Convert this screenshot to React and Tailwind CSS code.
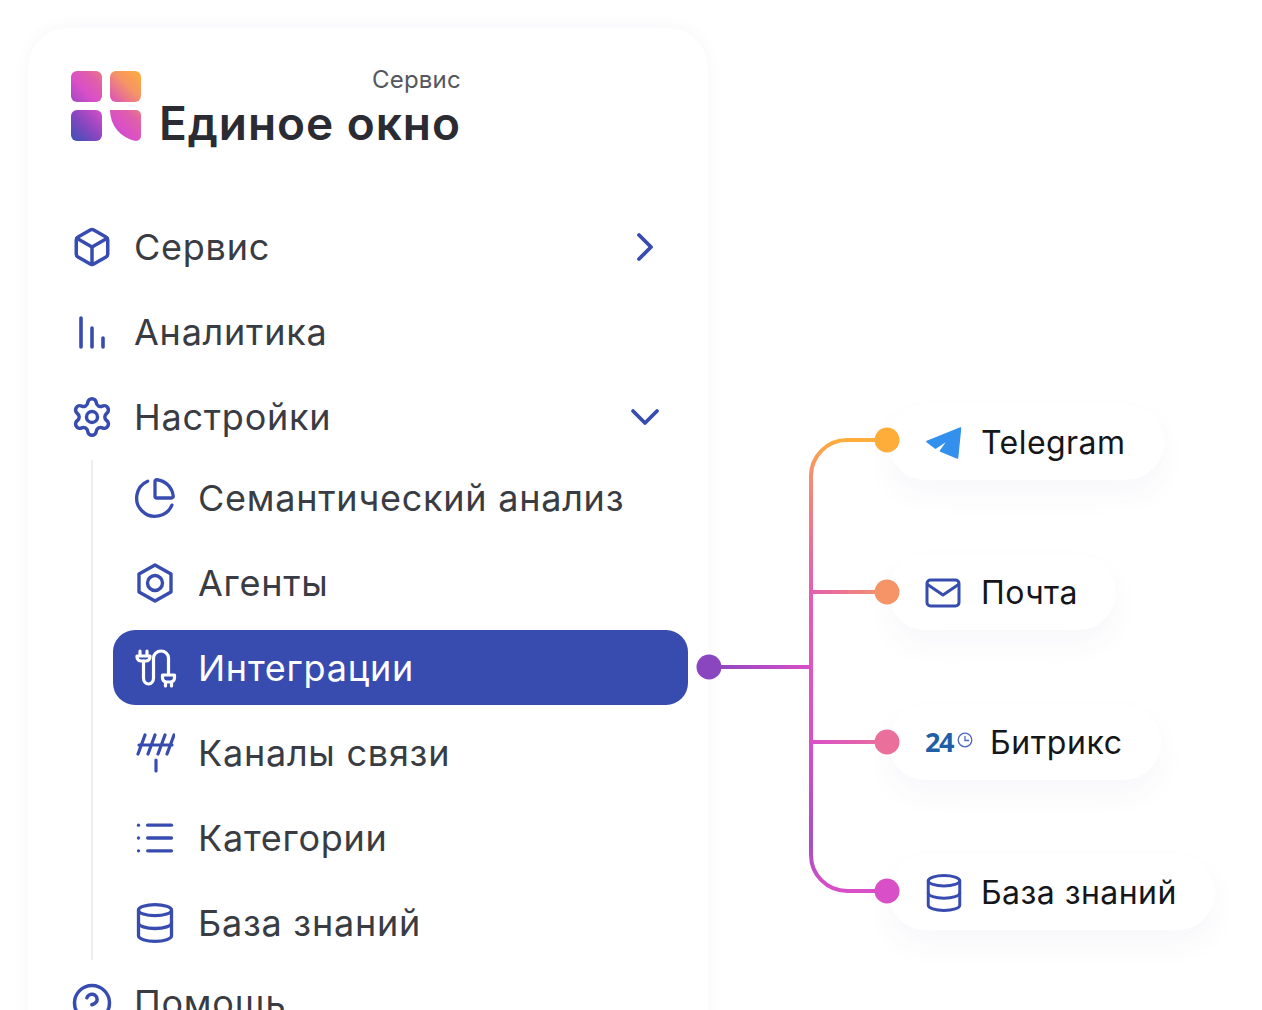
import { Box, ChevronRight, ChevronDown, Settings, ChartPie, List, Database, CircleHelp } from "lucide-react";

const blue = "#384cb0";

function Logo() {
  return (
    <svg width="72" height="72" viewBox="70 70 72 72" className="shrink-0">
      <defs>
        <linearGradient id="logoGrad" gradientUnits="userSpaceOnUse" x1="71" y1="141" x2="141" y2="71">
          <stop offset="0" stopColor="#3b50b8" />
          <stop offset="0.22" stopColor="#8a46bf" />
          <stop offset="0.45" stopColor="#d94fc8" />
          <stop offset="0.62" stopColor="#e060a8" />
          <stop offset="0.8" stopColor="#f59467" />
          <stop offset="1" stopColor="#ffad3a" />
        </linearGradient>
      </defs>
      <rect x="71" y="71" width="31" height="31" rx="6" fill="url(#logoGrad)" />
      <rect x="110" y="71" width="31" height="31" rx="6" fill="url(#logoGrad)" />
      <rect x="71" y="110" width="31" height="31" rx="6" fill="url(#logoGrad)" />
      <path d="M110 110H136a5 5 0 0 1 5 5V136a5 5 0 0 1-5 5A31 31 0 0 1 110 110Z" fill="url(#logoGrad)" />
    </svg>
  );
}

function BarsIcon() {
  return (
    <svg width="40" height="40" viewBox="0 0 40 40" fill="none" stroke={blue} strokeWidth="3.6" strokeLinecap="round">
      <path d="M9 6V35M20 16V35M31 26V35" />
    </svg>
  );
}

function NutIcon() {
  return (
    <svg width="40" height="40" viewBox="0 0 40 40" fill="none" stroke={blue} strokeWidth="3.4" strokeLinejoin="round">
      <path d="M20 2 36 11V29L20 38 4 29V11Z" />
      <circle cx="20" cy="20" r="7.5" />
    </svg>
  );
}

function PlugIcon() {
  return (
    <svg width="40" height="40" viewBox="0 0 40 40" fill="none" stroke="#fff" strokeWidth="3.2" strokeLinecap="round" strokeLinejoin="round" className="overflow-visible">
      <path d="M5 3V8M12 3V8M2 8H15V9A4 4 0 0 1 11 13H6A4 4 0 0 1 2 9Z" />
      <path d="M8.5 13V30A5 6 0 0 0 18.5 30V10A7.5 7 0 0 1 33.5 10V26" />
      <path d="M27.5 27H39.5V30A4 4 0 0 1 35.5 34H31.5A4 4 0 0 1 27.5 30ZM30.5 34V38M36.5 34V38" />
    </svg>
  );
}

function AntennaIcon() {
  return (
    <svg width="40" height="40" viewBox="0 0 40 40" fill="none" stroke={blue} strokeWidth="3.2" strokeLinecap="round">
      <path d="M10 2 3 21M20 2 13 21M30 2 23 21M39 2 32 21M4 12H37" />
      <path d="M21 27V38" />
    </svg>
  );
}

function TelegramIcon() {
  return (
    <svg width="38" height="34" viewBox="0 0 38 34" fill="#3391ed" stroke="#3391ed" strokeWidth="1.6" strokeLinejoin="round">
      <path d="M2 15.5 35.5 2 32.5 32 15.5 25 24 13 10.5 22Z" />
    </svg>
  );
}

function MailIcon() {
  return (
    <svg width="36" height="30" viewBox="0 0 36 30" fill="none" stroke={blue} strokeWidth="3" strokeLinejoin="round" strokeLinecap="round">
      <rect x="2" y="2" width="32" height="26" rx="3.5" />
      <path d="M2.5 6.5 18 17 33.5 6.5" />
    </svg>
  );
}

function ClockIcon() {
  return (
    <svg width="16" height="16" viewBox="0 0 16 16" fill="none" stroke="#4a68c8" strokeWidth="1.3">
      <circle cx="8" cy="8" r="6.8" />
      <path d="M8 4V8.5H12" />
    </svg>
  );
}

function TopRow({ icon, label, arrow }) {
  return (
    <div className="h-[75px] flex items-center">
      <div className="w-[44px] flex justify-center">{icon}</div>
      <span className="ml-[20px] text-[36px] tracking-[0.75px] text-[#3a3c44]">{label}</span>
      {arrow && <div className="ml-auto mr-[39px] flex">{arrow}</div>}
    </div>
  );
}

function SubRow({ icon, label, active }) {
  return (
    <div className={`h-[75px] w-[575px] rounded-[22px] pl-[20px] flex items-center ${active ? "bg-[#384cb0] text-white" : "text-[#3a3c44]"}`}>
      <div className="w-[44px] flex justify-center">{icon}</div>
      <span className="ml-[21px] text-[36px] tracking-[0.75px]">{label}</span>
    </div>
  );
}

function Pill({ children }) {
  return (
    <div className="h-[75px] w-fit rounded-[38px] bg-white pl-[37px] pr-[38px] flex items-center shadow-[0_14px_30px_rgba(60,60,140,0.045)] text-[32px] tracking-[0.45px] text-[#15161a]">
      {children}
    </div>
  );
}

function Connectors() {
  return (
    <svg className="absolute inset-0" width="1262" height="1010" viewBox="0 0 1262 1010" fill="none" strokeWidth="4">
      <defs>
        <linearGradient id="trunk" gradientUnits="userSpaceOnUse" x1="0" y1="440" x2="0" y2="891">
          <stop offset="0" stopColor="#ffad3a" />
          <stop offset="0.07" stopColor="#f48f70" />
          <stop offset="0.33" stopColor="#e45fb0" />
          <stop offset="0.66" stopColor="#d94fc8" />
          <stop offset="0.9" stopColor="#a84fc4" />
          <stop offset="1" stopColor="#d94fc8" />
        </linearGradient>
        <linearGradient id="b1" gradientUnits="userSpaceOnUse" x1="811" y1="0" x2="887" y2="0">
          <stop offset="0" stopColor="#e45fb0" />
          <stop offset="1" stopColor="#f59467" />
        </linearGradient>
        <linearGradient id="b2" gradientUnits="userSpaceOnUse" x1="709" y1="0" x2="811" y2="0">
          <stop offset="0" stopColor="#8a46bf" />
          <stop offset="1" stopColor="#d94fc8" />
        </linearGradient>
        <linearGradient id="b3" gradientUnits="userSpaceOnUse" x1="811" y1="0" x2="887" y2="0">
          <stop offset="0" stopColor="#d94fc8" />
          <stop offset="1" stopColor="#ea6f9b" />
        </linearGradient>
      </defs>
      <path d="M887 440H847A36 36 0 0 0 811 476V855A36 36 0 0 0 847 891H887" stroke="url(#trunk)" />
      <path d="M811 592H887" stroke="url(#b1)" />
      <path d="M709 667H811" stroke="url(#b2)" />
      <path d="M811 742H887" stroke="url(#b3)" />
      <circle cx="887" cy="440" r="12.5" fill="#ffad3a" />
      <circle cx="887" cy="592" r="12.5" fill="#f59467" />
      <circle cx="887" cy="742" r="12.5" fill="#ea6f9b" />
      <circle cx="887" cy="891" r="12.5" fill="#d94fc8" />
      <circle cx="709" cy="667" r="12.5" fill="#8a46bf" />
    </svg>
  );
}

export default function App() {
  return (
    <div className="relative h-[1010px] w-[1262px] overflow-hidden bg-white flex font-['Inter',sans-serif]">
      <div className="ml-[28px] mt-[28px] h-[1100px] w-[680px] shrink-0 rounded-[40px] bg-white pl-[42px] shadow-[0_0_20px_rgba(60,60,140,0.04)]">
        <div className="mt-[42px] flex items-start">
          <Logo />
          <div className="ml-[17px] flex flex-col items-end">
            <span className="text-[24px] leading-[24px] tracking-[0.2px] text-[#55575e] -mt-[2px]">Сервис</span>
            <span className="text-[46px] leading-[56px] font-semibold tracking-[0.95px] text-[#2b2c33] mt-[3px]">Единое окно</span>
          </div>
        </div>

        <div className="mt-[58px] flex flex-col gap-[10px]">
          <TopRow icon={<Box size={42} color={blue} strokeWidth={2} />} label="Сервис" arrow={<ChevronRight size={48} color={blue} strokeWidth={1.9} />} />
          <TopRow icon={<BarsIcon />} label="Аналитика" />
          <TopRow icon={<Settings size={44} color={blue} strokeWidth={1.9} />} label="Настройки" arrow={<ChevronDown size={48} color={blue} strokeWidth={1.9} />} />
        </div>

        <div className="mt-[6px] ml-[21px] border-l-[2px] border-[#eeeef0] pl-[20px] flex flex-col gap-[10px]">
          <SubRow icon={<ChartPie size={44} color={blue} strokeWidth={1.8} />} label="Семантический анализ" />
          <SubRow icon={<NutIcon />} label="Агенты" />
          <SubRow active icon={<PlugIcon />} label="Интеграции" />
          <SubRow icon={<AntennaIcon />} label="Каналы связи" />
          <SubRow icon={<List size={44} color={blue} strokeWidth={1.8} />} label="Категории" />
          <SubRow icon={<Database size={44} color={blue} strokeWidth={1.8} />} label="База знаний" />
        </div>

        <div className="mt-[5px]">
          <TopRow icon={<CircleHelp size={42} color={blue} strokeWidth={2} />} label="Помощь" />
        </div>
      </div>

      <div className="ml-[180px] pt-[405px] flex flex-col gap-[75px]">
        <Pill>
          <TelegramIcon />
          <span className="ml-[18px]">Telegram</span>
        </Pill>
        <Pill>
          <MailIcon />
          <span className="ml-[20px]">Почта</span>
        </Pill>
        <Pill>
          <span className="font-['Open_Sans',sans-serif] text-[27px] font-bold text-[#1f5fa8] tracking-[-1.5px]">24</span>
          <span className="ml-[4px] -mt-[6px] flex"><ClockIcon /></span>
          <span className="ml-[17px] tracking-[0.6px]">Битрикс</span>
        </Pill>
        <Pill>
          <span className="-ml-[2px] flex"><Database size={42} color={blue} strokeWidth={1.7} /></span>
          <span className="ml-[16px]">База знаний</span>
        </Pill>
      </div>

      <Connectors />
    </div>
  );
}
